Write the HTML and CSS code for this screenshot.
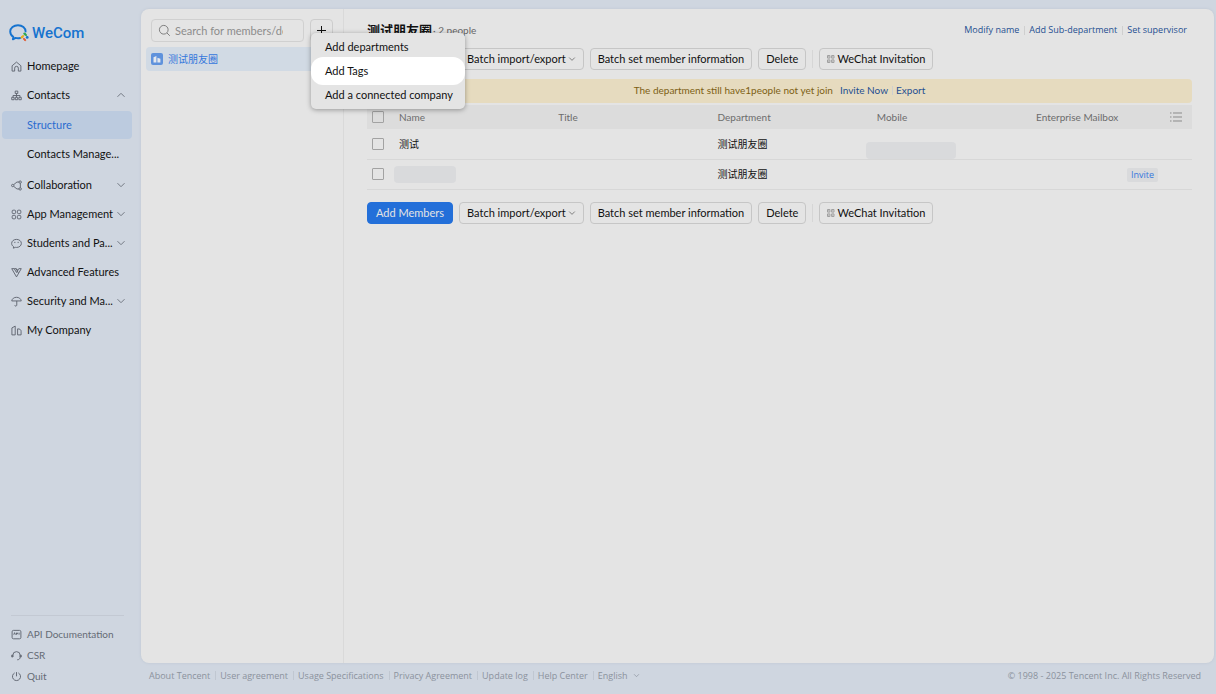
FILE: index.html
```html
<!DOCTYPE html>
<html lang="en">
<head>
    <meta charset="UTF-8">
    <meta name="viewport" content="width=device-width, initial-scale=1.0">
    <title>WeCom</title>
    <link rel="stylesheet" href="styles.css">
</head>
<body>
    <svg class="sprite" aria-hidden="true">
        <symbol id="down" viewBox="0 0 10 10"><path d="M1.5 3.2 5 6.7l3.5-3.5"/></symbol>
        <symbol id="up" viewBox="0 0 10 10"><path d="M1.5 6.8 5 3.3l3.5 3.5"/></symbol>
        <symbol id="qr" viewBox="0 0 8 8"><path d="M.5.5h2.400v2.600H.5zM4.600.5h2.400v2.600H4.600zM.5 4.900h2.400v2.600H.5zM4.600 4.900h2.400v2.600H4.600zM1.200 1.800h1M5.300 1.800h1M1.200 6.200h1M5.300 6.200h1"/></symbol>
    </svg>

    <aside class="sidebar">
        <a class="logo" href="#">
            <svg class="logo-mark" viewBox="0 0 20 18" aria-hidden="true">
                <path d="M16.6 7.600C16.600 3.900 13.300 1.200 9 1.200S1.200 3.900 1.200 7.600c0 2.200 1.200 4.100 3.100 5.300l-.4 2.500 2.700-1.500c.8.2 1.600.3 2.400.3.800 0 1.500-.1 2.200-.2" fill="none" stroke="#1673cf" stroke-width="1.900" stroke-linecap="round" stroke-linejoin="round"/>
                <path d="M14.800 9c1.800.1 2.700.9 2.700 2.600-1.700 0-2.600-.9-2.700-2.600z" fill="#2fa84f" stroke="#2fa84f"/>
                <path d="M14.600 11.500c0 1.700-.9 2.500-2.600 2.600.1-1.700.9-2.500 2.600-2.600z" fill="#e7ae1c" stroke="#e7ae1c"/>
                <path d="M14.500 14.300c1.500.1 2.200.9 2.200 2.400-1.500 0-2.200-.9-2.200-2.400z" fill="#e0603a" stroke="#e0603a"/>
                <circle cx="18.200" cy="13.400" r="1.400" fill="#1673cf"/>
            </svg>
            <span>WeCom</span>
        </a>

        <nav class="menu">
            <a class="menu-item" href="#">
                <svg class="icon" viewBox="0 0 12 12"><path d="M1.200 5.200 6 1.200l4.800 4V11H8V7.800a2 2 0 0 0-4 0V11H1.200z"/></svg>
                <span>Homepage</span>
            </a>
            <a class="menu-item" href="#">
                <svg class="icon" viewBox="0 0 12 12"><path d="M4.600 1.200h2.800v2.600H4.600zM6 3.800v4M2.200 7.800V6h7.600v1.800M.8 8h2.600v2.600H.8zM4.700 8h2.600v2.600H4.700zM8.600 8h2.600v2.600H8.600z"/></svg>
                <span>Contacts</span>
                <svg class="arrow"><use href="#up"/></svg>
            </a>
            <div class="submenu">
                <a class="menu-item active" href="#"><span>Structure</span></a>
                <a class="menu-item" href="#"><span>Contacts Manage...</span></a>
            </div>
            <a class="menu-item" href="#">
                <svg class="icon" viewBox="0 0 12 12"><path d="M3 5 6.500 2.200h2.300M3 7l3.500 2.800h2.300M10.200 3.600v4.800"/><circle cx="1.900" cy="6" r="1.300"/><circle cx="10" cy="2.300" r="1.300"/><circle cx="10" cy="9.700" r="1.300"/></svg>
                <span>Collaboration</span>
                <svg class="arrow"><use href="#down"/></svg>
            </a>
            <a class="menu-item" href="#">
                <svg class="icon" viewBox="0 0 12 12"><rect x="1.300" y="1.300" width="3.700" height="3.700" rx="1"/><rect x="7" y="1.300" width="3.700" height="3.700" rx="1"/><rect x="1.300" y="7" width="3.700" height="3.700" rx="1"/><rect x="7" y="7" width="3.700" height="3.700" rx="1"/></svg>
                <span>App Management</span>
                <svg class="arrow"><use href="#down"/></svg>
            </a>
            <a class="menu-item" href="#">
                <svg class="icon" viewBox="0 0 12 12"><path d="M6 1.500c3 0 5.300 1.900 5.300 4.400S9 10.300 6 10.300l-1.200-.1-2.200.9.200-1.700C1.500 8.600.7 7.400.7 5.900.7 3.400 3 1.500 6 1.500zM4.200 4.200v1.300M7.800 4.200v1.300"/></svg>
                <span>Students and Pa...</span>
                <svg class="arrow"><use href="#down"/></svg>
            </a>
            <a class="menu-item" href="#">
                <svg class="icon" viewBox="0 0 12 12"><path d="M.8 1.800h2.700L6 6l2.500-4.200h2.700L6 10.800zM3.600 1.800h2L8 6.500M7.200 3.800 6.100 1.800"/></svg>
                <span>Advanced Features</span>
            </a>
            <a class="menu-item" href="#">
                <svg class="icon" viewBox="0 0 12 12"><path d="M.8 5.400C1.200 2.900 3.300 1.400 6 1.400s4.800 1.500 5.200 4zM6.300 5.400v4.400c0 1.600-2.200 1.600-2.200.1"/></svg>
                <span>Security and Ma...</span>
                <svg class="arrow"><use href="#down"/></svg>
            </a>
            <a class="menu-item" href="#">
                <svg class="icon" viewBox="0 0 12 12"><path d="M4.600 10.800H1V3.200l3.600-2zM7.200 10.800V4.200c2.400 0 3.800.8 3.800 2.600v4z"/></svg>
                <span>My Company</span>
            </a>
        </nav>

        <nav class="menu-bottom">
            <a href="#">
                <svg class="icon" viewBox="0 0 12 12"><rect x="1.200" y="1.500" width="9.600" height="9.200" rx="1.500"/><path d="M3 6.200 3.900 4l.9 2.200M6 6.200V4.300h1v1H6M8.800 4v2.200"/></svg>
                <span>API Documentation</span>
            </a>
            <a href="#">
                <svg class="icon" viewBox="0 0 12 12"><path d="M2 7.500V5.800a4 4 0 0 1 8 0v2c0 1.700-1.300 2.900-3.200 2.900M2 5.600H.8v2H2zM10 5.600h1.200v2H10z"/></svg>
                <span>CSR</span>
            </a>
            <a href="#">
                <svg class="icon" viewBox="0 0 12 12"><path d="M4 2.100a4.400 4.400 0 1 0 4 0M6 1.200v4.600"/></svg>
                <span>Quit</span>
            </a>
        </nav>
    </aside>

    <div class="page">
        <main class="panel">
            <section class="tree">
                <div class="tree-head">
                    <label class="search">
                        <svg class="search-icon" viewBox="0 0 14 14" aria-hidden="true"><circle cx="6.200" cy="6.200" r="4.700"/><path d="m9.700 9.700 3 3"/></svg>
                        <input type="text" placeholder="Search for members/departments" aria-label="Search">
                    </label>
                    <div class="add">
                        <button class="add-btn" type="button" aria-label="Add">
                            <svg viewBox="0 0 9 9"><path d="M4.500 0v9M0 4.500h9"/></svg>
                        </button>
                        <div class="dropdown">
                            <button type="button">Add departments</button>
                            <button class="highlight" type="button">Add Tags</button>
                            <button type="button">Add a connected company</button>
                        </div>
                    </div>
                </div>
                <a class="tree-item" href="#">
                    <svg viewBox="0 0 12 12" aria-hidden="true"><rect width="12" height="12" rx="2" fill="#5f92dc"/><path d="M2.500 9.500V4.200L5.400 3v6.500zM6.400 9.500V4.800l3 1v3.700z" fill="#e4e8ee"/></svg>
                    <span>测试朋友圈</span>
                </a>
            </section>

            <section class="content">
                <header class="content-head">
                    <h1>测试朋友圈</h1>
                    <span class="count">· 2 people</span>
                    <div class="links">
                        <a href="#">Modify name</a>
                        <a href="#">Add Sub-department</a>
                        <a href="#">Set supervisor</a>
                    </div>
                </header>

                <div class="toolbar">
                    <button class="btn primary" type="button">Add Members</button>
                    <button class="btn" type="button">Batch import/export <svg class="caret"><use href="#down"/></svg></button>
                    <button class="btn" type="button">Batch set member information</button>
                    <button class="btn" type="button">Delete</button>
                    <span class="divider"></span>
                    <button class="btn" type="button"><svg class="qr"><use href="#qr"/></svg>WeChat Invitation</button>
                </div>

                <div class="notice">
                    <span>The department still have1people not yet join</span>
                    <div class="links">
                        <a href="#">Invite Now</a>
                        <a href="#">Export</a>
                    </div>
                </div>

                <table class="members">
                    <colgroup>
                        <col class="col-check">
                        <col>
                        <col>
                        <col>
                        <col>
                        <col class="col-mail">
                        <col class="col-set">
                    </colgroup>
                    <thead>
                        <tr>
                            <th><input type="checkbox" aria-label="Select all"></th>
                            <th>Name</th>
                            <th>Title</th>
                            <th>Department</th>
                            <th>Mobile</th>
                            <th>Enterprise Mailbox</th>
                            <th>
                                <button class="columns" type="button" aria-label="Columns">
                                    <svg viewBox="0 0 12 10"><path d="M0 1h1.500M3 1h9M0 5h1.500M3 5h9M0 9h1.500M3 9h9"/></svg>
                                </button>
                            </th>
                        </tr>
                    </thead>
                    <tbody>
                        <tr>
                            <td><input type="checkbox" aria-label="Select member"></td>
                            <td>测试</td>
                            <td></td>
                            <td>测试朋友圈</td>
                            <td class="low"><span class="masked wide"></span></td>
                            <td></td>
                            <td></td>
                        </tr>
                        <tr>
                            <td><input type="checkbox" aria-label="Select member"></td>
                            <td><span class="masked"></span></td>
                            <td></td>
                            <td>测试朋友圈</td>
                            <td></td>
                            <td class="right"><button class="invite" type="button">Invite</button></td>
                            <td></td>
                        </tr>
                    </tbody>
                </table>

                <div class="toolbar">
                    <button class="btn primary" type="button">Add Members</button>
                    <button class="btn" type="button">Batch import/export <svg class="caret"><use href="#down"/></svg></button>
                    <button class="btn" type="button">Batch set member information</button>
                    <button class="btn" type="button">Delete</button>
                    <span class="divider"></span>
                    <button class="btn" type="button"><svg class="qr"><use href="#qr"/></svg>WeChat Invitation</button>
                </div>
            </section>
        </main>

        <footer class="footer">
            <div class="links">
                <a href="#">About Tencent</a>
                <a href="#">User agreement</a>
                <a href="#">Usage Specifications</a>
                <a href="#">Privacy Agreement</a>
                <a href="#">Update log</a>
                <a href="#">Help Center</a>
                <label class="lang">
                    <select aria-label="Language"><option>English</option></select>
                    <svg><use href="#down"/></svg>
                </label>
            </div>
            <span>© 1998 - 2025 Tencent Inc. All Rights Reserved</span>
        </footer>
    </div>
</body>
</html>
```
FILE: styles.css
```css
* {
    box-sizing: border-box;
}
body {
    display: flex;
    margin: 0;
    min-height: 100vh;
    background-color: #cfd6e0;
    color: #111;
    font-family: Lato, "Noto Sans CJK SC", sans-serif;
    font-size: 11px;
    line-height: 16px;
}
button, input, select {
    font: inherit;
    color: inherit;
}
button {
    padding: 0;
    border: 0;
    background: none;
    white-space: nowrap;
}
a {
    color: inherit;
    text-decoration: none;
}
svg {
    flex: none;
    fill: none;
    stroke: currentColor;
}
.sprite {
    display: none;
}

/* sidebar */
.sidebar {
    display: flex;
    flex-direction: column;
    flex: none;
    width: 141px;
    padding: 23px 9px 10px 2px;
}
.logo {
    display: flex;
    align-items: center;
    gap: 3px;
    height: 20px;
    padding-left: 7px;
    color: #1673cf;
    font-family: Roboto, sans-serif;
    font-size: 15px;
    font-weight: 500;
}
.logo-mark {
    width: 20px;
    height: 18px;
    stroke: none;
}
.menu {
    display: flex;
    flex-direction: column;
    gap: 1px;
    margin-top: 9px;
}
.submenu {
    display: flex;
    flex-direction: column;
    gap: 1px;
    padding: 1px 0 2px;
}
.menu-item {
    display: flex;
    align-items: center;
    height: 28px;
    padding: 0 6px 0 9px;
    border-radius: 4px;
    white-space: nowrap;
}
.submenu .menu-item {
    padding-left: 25px;
}
.menu-item.active {
    background-color: #bccbdf;
    color: #2a6bd0;
}
.icon {
    width: 11px;
    height: 11px;
    margin-right: 5px;
    color: #5d636d;
}
.arrow {
    width: 10px;
    height: 10px;
    margin-left: auto;
    color: #737983;
}
.menu-bottom {
    display: flex;
    flex-direction: column;
    gap: 5px;
    margin: auto 8px 0 9px;
    padding-top: 10px;
    border-top: 1px solid #c3c9d3;
    color: #656b75;
    font-size: 10px;
}
.menu-bottom a {
    display: flex;
    align-items: center;
}

/* panel */
.page {
    display: flex;
    flex-direction: column;
    flex: 1;
    min-width: 0;
    padding: 9px 2px 0 0;
}
.panel {
    display: flex;
    flex: 1;
    border-radius: 8px;
    background-color: #e4e4e4;
    box-shadow: 0 0 3px #bdc5d1;
}
.tree {
    flex: none;
    width: 203px;
    padding: 10px 5px;
    border-right: 1px solid #d9d9d9;
}
.tree-head {
    display: flex;
    gap: 6px;
    padding: 0 5px;
}
.search {
    display: flex;
    align-items: center;
    gap: 4px;
    flex: 1;
    min-width: 0;
    height: 23px;
    padding: 0 20px 0 6px;
    border: 1px solid #d0d0d0;
    border-radius: 4px;
    color: #777;
}
.search-icon {
    width: 13px;
    height: 13px;
}
.search input {
    width: 100%;
    min-width: 0;
    padding: 0;
    border: 0;
    outline: 0;
    background: none;
}
.search input::placeholder {
    color: #8c8c8c;
}
.add {
    position: relative;
}
.add-btn {
    display: flex;
    align-items: center;
    justify-content: center;
    width: 23px;
    height: 23px;
    border: 1px solid #cdcdcd;
    border-radius: 4px;
}
.add-btn svg {
    width: 9px;
    height: 9px;
}
.dropdown {
    position: absolute;
    top: 14px;
    left: 1px;
    z-index: 1;
    display: flex;
    flex-direction: column;
    width: 154px;
    padding: 2px 0;
    border-radius: 5px;
    background-color: #e4e4e4;
    box-shadow: 0 1px 5px rgba(0, 0, 0, 0.35);
}
.dropdown button {
    height: 24px;
    padding: 0 14px;
    text-align: left;
}
.dropdown .highlight {
    height: 28px;
    margin: -2px 0;
    border-radius: 12px;
    background-color: #fff;
}
.tree-item {
    display: flex;
    align-items: center;
    gap: 5px;
    height: 24px;
    margin-top: 5px;
    padding: 0 5px;
    border-radius: 4px;
    background-color: #d1dae4;
    color: #3577dc;
    font-size: 10px;
}
.tree-item svg {
    width: 12px;
    height: 12px;
    stroke: none;
}

/* content */
.content {
    flex: 1;
    min-width: 0;
    padding: 11px 22px 12px 23px;
}
.content-head {
    display: flex;
    align-items: center;
    gap: 1px;
    height: 20px;
}
h1 {
    margin: 0;
    font-size: 13px;
}
.count {
    color: #666;
    font-size: 10px;
}
.links {
    display: flex;
    align-items: center;
}
.links > * + * {
    margin-left: 5px;
    padding-left: 5px;
    background: linear-gradient(#cfcfcf, #cfcfcf) left center / 1px 9px no-repeat;
}
.content-head .links {
    margin-left: auto;
    padding-right: 5px;
    color: #1f4f91;
    font-family: "Open Sans", sans-serif;
    font-size: 9px;
}
.toolbar {
    display: flex;
    align-items: center;
    gap: 6px;
    margin: 8px 0 9px;
}
.btn {
    display: flex;
    align-items: center;
    height: 22px;
    padding: 0 7px;
    border: 1px solid #c6c6c6;
    border-radius: 4px;
}
.btn.primary {
    padding: 0 8px;
    border-color: #236fd9;
    background-color: #236fd9;
    color: #e4e4e4;
}
.caret {
    width: 8px;
    height: 8px;
    margin-left: 2px;
    color: #666;
}
.qr {
    width: 8px;
    height: 8px;
    margin-right: 2px;
    color: #a0a0a0;
}
.divider {
    width: 1px;
    height: 18px;
    background-color: #d6d6d6;
}
.notice {
    display: flex;
    align-items: center;
    justify-content: center;
    gap: 7px;
    height: 24px;
    padding-bottom: 2px;
    border-radius: 4px;
    background-color: #e6dbbf;
    color: #7d5f14;
    font-size: 10px;
}
.notice .links {
    color: #1f4f91;
}
.notice .links > * + * {
    margin-left: 4px;
    padding-left: 4px;
}
.members {
    width: 100%;
    margin: 2px 0 12px;
    border-collapse: collapse;
    table-layout: fixed;
    font-size: 10px;
}
.col-check {
    width: 32px;
}
.col-mail {
    width: 127px;
}
.col-set {
    width: 29px;
}
.members th {
    height: 24px;
    padding: 0;
    background-color: #dcdcdc;
    color: #6c6c6c;
    font-weight: normal;
    text-align: left;
}
.members td {
    height: 30px;
    padding: 0;
    border-bottom: 1px solid #d7d7d7;
}
.members th:first-child, .members td:first-child {
    padding-left: 5px;
}
.members input {
    display: block;
    appearance: none;
    width: 12px;
    height: 12px;
    margin: 0;
    border: 1px solid #a2a2a2;
    border-radius: 1px;
}
.members .low {
    vertical-align: bottom;
}
.members .right {
    padding-right: 5px;
    text-align: right;
}
.masked {
    display: block;
    width: 62px;
    height: 17px;
    margin-left: -5px;
    border-radius: 4px;
    background-color: #d9dadc;
}
.masked.wide {
    width: 90px;
    margin-left: -11px;
}
.columns {
    display: flex;
    padding-left: 7px;
    color: #8b8b8b;
}
.columns svg {
    width: 12px;
    height: 10px;
}
.invite {
    height: 14px;
    padding: 0 4px;
    border-radius: 2px;
    background-color: #d9dadc;
    color: #3577dc;
    font-family: "Open Sans", sans-serif;
    font-size: 9px;
    line-height: 14px;
}

/* footer */
.footer {
    display: flex;
    justify-content: space-between;
    align-items: center;
    height: 31px;
    padding: 0 13px 6px 8px;
    color: #8b929d;
    font-family: "Open Sans", sans-serif;
    font-size: 9px;
}
.footer .links > * + * {
    background-image: linear-gradient(#c0c7d1, #c0c7d1);
}
.lang {
    display: flex;
    align-items: center;
    gap: 5px;
}
.lang select {
    padding: 0;
    border: 0;
    appearance: none;
    background: none;
}
.lang svg {
    width: 7px;
    height: 7px;
}
```
